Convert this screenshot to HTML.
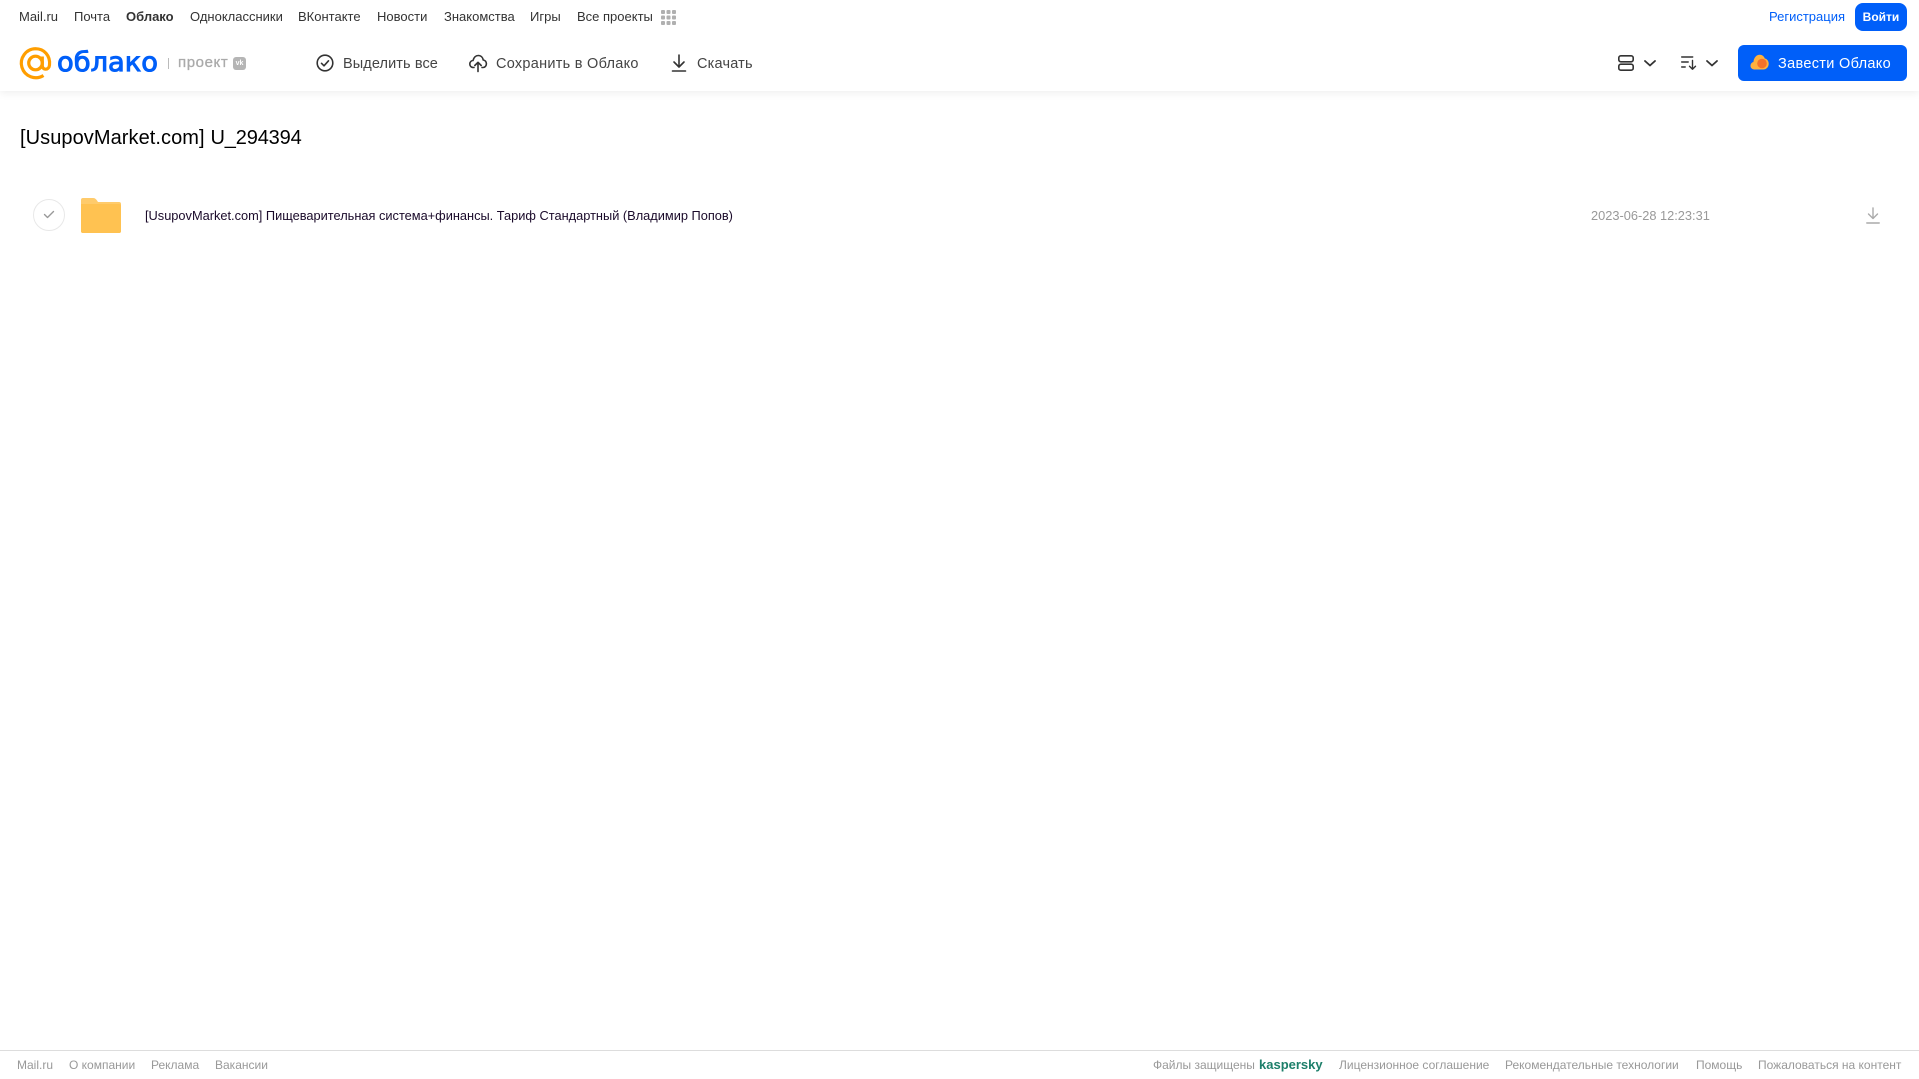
<!DOCTYPE html>
<html lang="ru"><head><meta charset="utf-8"><title>Облако</title>
<style>
html,body{margin:0;padding:0;background:#fff}
body{width:1919px;height:1079px;position:relative;overflow:hidden;font-family:"Liberation Sans",Arial,sans-serif}
.t{position:absolute;white-space:nowrap;line-height:20px}
.n{font-size:13px;color:#333;top:7px}
.a{font-size:14.5px;color:#444;top:54px;letter-spacing:.1px}
.f{font-size:12px;color:#999;top:1055px}
svg{position:absolute;overflow:visible}
</style></head><body>
<div style="position:absolute;left:0;top:0;width:1919px;height:91px;background:#fff;box-shadow:0 2px 8px rgba(0,0,0,.07)"></div>

<span class="t n" style="left:19px">Mail.ru</span>
<span class="t n" style="left:74px">Почта</span>
<span class="t n" style="left:126px;font-weight:bold">Облако</span>
<span class="t n" style="left:190px">Одноклассники</span>
<span class="t n" style="left:298px">ВКонтакте</span>
<span class="t n" style="left:377px">Новости</span>
<span class="t n" style="left:444px">Знакомства</span>
<span class="t n" style="left:530px">Игры</span>
<span class="t n" style="left:577px">Все проекты</span>
<svg style="left:661px;top:10px" width="15" height="15" fill="#b0b0b0"><rect width="4" height="4" rx="1"/><rect x="5.500" width="4" height="4" rx="1"/><rect x="11" width="4" height="4" rx="1"/><rect y="5.500" width="4" height="4" rx="1"/><rect x="5.500" y="5.500" width="4" height="4" rx="1"/><rect x="11" y="5.500" width="4" height="4" rx="1"/><rect y="11" width="4" height="4" rx="1"/><rect x="5.500" y="11" width="4" height="4" rx="1"/><rect x="11" y="11" width="4" height="4" rx="1"/></svg>

<span class="t n" style="left:1769px;color:#005ff9">Регистрация</span>
<div style="position:absolute;left:1855px;top:3px;width:52px;height:28px;background:#005ff9;border-radius:8px;color:#fff;font-size:12px;font-weight:bold;text-align:center;line-height:28px">Войти</div>

<svg style="left:19px;top:47px" width="33" height="33" viewBox="0 0 33 33" fill="none" stroke="#ff9e00" stroke-width="3.200"><circle cx="16.500" cy="16" r="6.800"/><path d="M23.300 9.500v9c0 5 6.800 5 7.200 -.5C31.500 8.500 25 1.700 16.500 1.700A14.500 14.500 0 1 0 24.500 28.500"/></svg>
<svg style="left:57px;top:44px" width="104" height="36"><text x="0" y="27" font-family="DejaVu Sans" font-size="27" fill="#005ff9" stroke="#005ff9" stroke-width="1" textLength="101" lengthAdjust="spacingAndGlyphs">облако</text></svg>
<div style="position:absolute;left:168px;top:58px;width:1px;height:11px;background:#bbb"></div>
<span class="t" style="left:178px;top:53px;font-size:15px;color:#aaa;letter-spacing:.6px;-webkit-text-stroke:.3px #aaa">проект</span>
<div style="position:absolute;left:233px;top:57px;width:13px;height:13px;background:#b5b5b5;border-radius:3px;color:#fff;font-size:7px;font-weight:bold;line-height:13px;text-align:center">vk</div>

<svg style="left:316px;top:54px" width="18" height="18" fill="none" stroke="#333" stroke-width="1.600"><circle cx="9" cy="9" r="7.800"/><path d="M5.500 9.300l2.500 2.500 4.500-5" stroke-linecap="round" stroke-linejoin="round"/></svg>
<span class="t a" style="left:343px">Выделить все</span>
<svg style="left:469px;top:54px" width="18" height="18" fill="none" stroke="#333" stroke-width="1.600" stroke-linecap="round" stroke-linejoin="round"><path d="M5 13.500H4.500C1.800 13.500.8 11.500.8 10c0-2 1.500-3.500 3.200-3.500C4.800 3.500 6.800 1.500 9.300 1.500c2.700 0 4.500 2 4.900 4.500 2 .2 3.200 2 3.200 3.800 0 2-1.500 3.700-3.400 3.700H13"/><path d="M9 17.500V8.500M5.800 11.500L9 8.300l3.200 3.200"/></svg>
<span class="t a" style="left:496px;letter-spacing:.27px">Сохранить в Облако</span>
<svg style="left:671px;top:54px" width="16" height="18" fill="none" stroke="#333" stroke-width="1.600" stroke-linecap="round" stroke-linejoin="round"><path d="M8 1v11.500M3 8l5 5 5-5M1.500 17h13"/></svg>
<span class="t a" style="left:697px;letter-spacing:.2px">Скачать</span>

<svg style="left:1618px;top:55px" width="16" height="16" fill="none" stroke="#333" stroke-width="1.600"><rect x=".8" y=".8" width="14.400" height="6" rx="2"/><rect x=".8" y="9.200" width="14.400" height="6" rx="2"/></svg>
<svg style="left:1644px;top:60px" width="12" height="7" fill="none" stroke="#333" stroke-width="1.800" stroke-linecap="round" stroke-linejoin="round"><path d="M1 1l5 4.500L11 1"/></svg>
<svg style="left:1681px;top:56px" width="16" height="14" fill="none" stroke="#333" stroke-width="1.400" stroke-linecap="round" stroke-linejoin="round"><path d="M.7 1h11M.7 6h6.500M.7 11h3.500M11.500 4.500v8.500M8.500 10.200l3 3 3-3"/></svg>
<svg style="left:1706px;top:60px" width="12" height="7" fill="none" stroke="#333" stroke-width="1.800" stroke-linecap="round" stroke-linejoin="round"><path d="M1 1l5 4.500L11 1"/></svg>

<div style="position:absolute;left:1738px;top:45px;width:169px;height:36px;background:#005ff9;border-radius:6px"></div>
<svg style="left:1750px;top:54px" width="19" height="16"><path d="M4 15.500a3.800 3.800 0 0 1-.6-7.500C4 3 7 .5 10 .8c2.500.2 4 1.700 4.800 3.700 2.500.5 3.900 2.700 3.900 5.200 0 3.200-2.300 5.800-5.500 5.800z" fill="#ffb13d"/><circle cx="12" cy="9.500" r="4.800" fill="#f4722b"/></svg>
<span class="t" style="left:1778px;top:54px;font-size:14.500px;color:#fff;letter-spacing:.32px">Завести Облако</span>

<span class="t" style="left:20px;top:127px;font-size:20px;line-height:23px;color:#000;letter-spacing:.07px">[UsupovMarket.com]</span>
<span class="t" style="left:210.500px;top:127px;font-size:20px;line-height:23px;color:#000;letter-spacing:-.15px">U_294394</span>

<div style="position:absolute;left:33px;top:199px;width:30px;height:30px;border:1px solid #e8e8e8;border-radius:50%"></div>
<svg style="left:43px;top:210px" width="12" height="9" fill="none" stroke="#999" stroke-width="1.400" stroke-linecap="round" stroke-linejoin="round"><path d="M1.500 4.500l3 3 6-6"/></svg>
<svg style="left:81px;top:198px" width="40" height="35"><path d="M2 0h10c2 0 3 1 4 2.500l1 1.500h21a2 2 0 0 1 2 2v27a2 2 0 0 1-2 2H2a2 2 0 0 1-2-2V2a2 2 0 0 1 2-2z" fill="#ffcb6b"/><path d="M0 6h38a2 2 0 0 1 2 2v25a2 2 0 0 1-2 2H2a2 2 0 0 1-2-2z" fill="#ffc251"/></svg>
<span class="t" style="left:145px;top:206px;font-size:12.800px;color:#1a0a2a">[UsupovMarket.com] Пищеварительная система+финансы. Тариф Стандартный (Владимир Попов)</span>
<span class="t" style="left:1591px;top:206px;font-size:12.800px;color:#999">2023-06-28 12:23:31</span>
<svg style="left:1866px;top:207px" width="14" height="18" fill="none" stroke="#aaa" stroke-width="1.400" stroke-linecap="round" stroke-linejoin="round"><path d="M7 1v10M2.500 7L7 11.500 11.500 7M.8 16h12.400"/></svg>

<div style="position:absolute;left:0;top:1050px;width:1919px;height:1px;background:#ddd"></div>
<span class="t f" style="left:17px">Mail.ru</span>
<span class="t f" style="left:69px">О компании</span>
<span class="t f" style="left:151px">Реклама</span>
<span class="t f" style="left:215px">Вакансии</span>
<span class="t f" style="left:1153px">Файлы защищены</span>
<span class="t" style="left:1259px;top:1055px;font-size:13px;font-weight:bold;color:#1d7f6a">kaspersky</span>
<span class="t f" style="left:1339px">Лицензионное соглашение</span>
<span class="t f" style="left:1505px">Рекомендательные технологии</span>
<span class="t f" style="left:1696px">Помощь</span>
<span class="t f" style="left:1758px">Пожаловаться на контент</span>
</body></html>
